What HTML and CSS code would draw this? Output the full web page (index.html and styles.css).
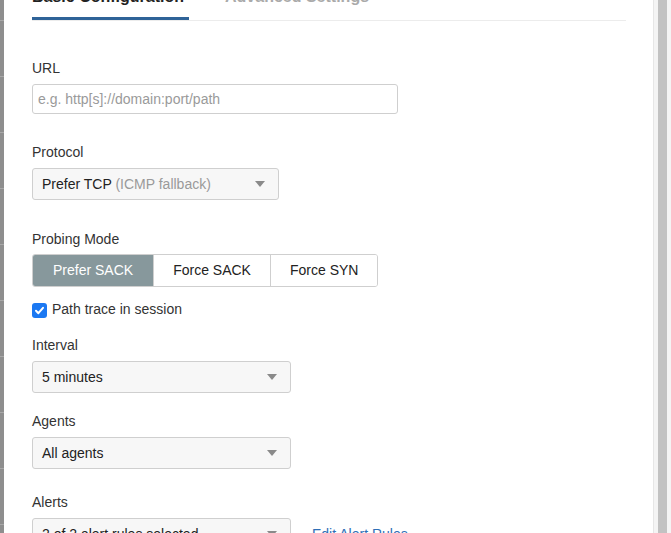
FILE: index.html
```html
<!DOCTYPE html>
<html>
<head>
<meta charset="utf-8">
<link rel="stylesheet" href="styles.css">
</head>
<body>
<div class="screen">
  <div class="backdrop"></div>
  <div class="modal">
    <div class="tabs">
      <div class="tab active">Basic Configuration</div>
      <div class="tab">Advanced Settings</div>
    </div>
    <div class="form">
      <div class="field field-lg">
        <div class="label">URL</div>
        <input class="input" type="text" placeholder="e.g. http[s]://domain:port/path">
      </div>
      <div class="field field-lg">
        <div class="label">Protocol</div>
        <div class="select select-protocol">
          <span>Prefer TCP <span class="muted">(ICMP fallback)</span></span>
          <span class="caret"></span>
        </div>
      </div>
      <div class="field">
        <div class="label label-probe">Probing Mode</div>
        <div class="btn-group">
          <div class="btn active">Prefer SACK</div>
          <div class="btn">Force SACK</div>
          <div class="btn">Force SYN</div>
        </div>
        <div class="check-row">
          <span class="checkbox">
            <svg width="11" height="11" viewBox="0 0 11 11"><path d="M2 5.8 L4.4 8.2 L9 2.8" fill="none" stroke="#fff" stroke-width="2" stroke-linecap="round" stroke-linejoin="round"/></svg>
          </span>
          <span>Path trace in session</span>
        </div>
      </div>
      <div class="field field-sm">
        <div class="label">Interval</div>
        <div class="select select-wide">
          <span>5 minutes</span>
          <span class="caret"></span>
        </div>
      </div>
      <div class="field field-md">
        <div class="label">Agents</div>
        <div class="select select-wide">
          <span>All agents</span>
          <span class="caret"></span>
        </div>
      </div>
      <div class="field">
        <div class="label">Alerts</div>
        <div class="row">
          <div class="select select-wide">
            <span>2 of 2 alert rules selected</span>
            <span class="caret"></span>
          </div>
          <a class="link" href="#">Edit Alert Rules</a>
        </div>
      </div>
    </div>
  </div>
  <div class="scrollbar"><div class="thumb"></div></div>
</div>
</body>
</html>
```
FILE: styles.css
```css
html, body {
  margin: 0;
  padding: 0;
  height: 533px;
  overflow: hidden;
  background: #fff;
}
body {
  font-family: "Liberation Sans", Arial, Helvetica, sans-serif;
  font-size: 14px;
  color: #333;
}
.screen {
  display: flex;
  height: 533px;
}
.backdrop {
  width: 4px;
  flex: none;
  background-color: #8e8e8e;
  background-image: repeating-linear-gradient(to bottom, transparent 0, transparent 20px, #a8a8a8 20px, #a8a8a8 21px, transparent 21px, transparent 56px);
}
.modal {
  flex: 1;
  background: #fff;
  border-right: 1px solid #e6e6e6;
  padding: 0 27px 0 28px;
  overflow: hidden;
}
.tabs {
  display: flex;
  margin-top: -14px;
  border-bottom: 1px solid #ececec;
}
.tab {
  font-size: 16px;
  line-height: 22px;
  font-weight: bold;
  color: #aaa;
  padding: 0 0 9px 0;
  border-bottom: 3px solid transparent;
  margin-right: 36px;
}
.tab.active {
  color: #222;
  padding-right: 5px;
  border-bottom-color: #2f6398;
}
.form {
  margin-top: 37px;
}
.field {
  display: flex;
  flex-direction: column;
  align-items: flex-start;
}
.field-lg { margin-bottom: 28px; }
.field-md { margin-bottom: 23px; }
.field-sm { margin-bottom: 18px; }
.label {
  line-height: 20px;
  margin-bottom: 6px;
  color: #333;
}
.label-probe {
  margin-top: 1px;
  margin-bottom: 5px;
}
.input {
  box-sizing: border-box;
  width: 366px;
  height: 30px;
  border: 1px solid #cfcfcf;
  border-radius: 3px;
  padding: 0 5px;
  font-family: inherit;
  font-size: 14px;
  color: #333;
  outline: none;
  margin: 0;
}
.input::placeholder { color: #9a9a9a; }
.select {
  box-sizing: border-box;
  height: 32px;
  display: flex;
  align-items: center;
  justify-content: space-between;
  border: 1px solid #cfcfcf;
  border-radius: 3px;
  background: #f7f7f7;
  padding: 0 13px 0 9px;
  color: #222;
}
.select-protocol { width: 247px; }
.select-wide { width: 259px; }
.muted { color: #9a9a9a; }
.caret {
  width: 0;
  height: 0;
  border-left: 5px solid transparent;
  border-right: 5px solid transparent;
  border-top: 6px solid #8a8a8a;
}
.btn-group {
  display: flex;
  border: 1px solid #cfcfcf;
  border-radius: 3px;
  overflow: hidden;
}
.btn {
  height: 31px;
  line-height: 31px;
  padding: 0 19px;
  color: #222;
  background: #fff;
  border-left: 1px solid #cfcfcf;
}
.btn:first-child { border-left: none; }
.btn.active {
  background: #87989c;
  color: #fff;
  padding: 0 20px;
}
.check-row {
  display: flex;
  align-items: center;
  gap: 5px;
  height: 18px;
  margin-top: 13px;
  margin-bottom: 17px;
  color: #333;
}
.checkbox {
  width: 15px;
  height: 15px;
  border-radius: 3px;
  background: #1b78f2;
  display: flex;
  align-items: center;
  justify-content: center;
  margin-top: 2px;
}
.row {
  display: flex;
  align-items: center;
  gap: 21px;
}
.link {
  color: #2f6fb7;
  text-decoration: none;
}
.scrollbar {
  width: 17px;
  flex: none;
  background: #f4f4f4;
  padding-left: 4px;
  box-sizing: border-box;
}
.thumb {
  width: 9px;
  height: 100%;
  background: #c2c2c2;
}
```
